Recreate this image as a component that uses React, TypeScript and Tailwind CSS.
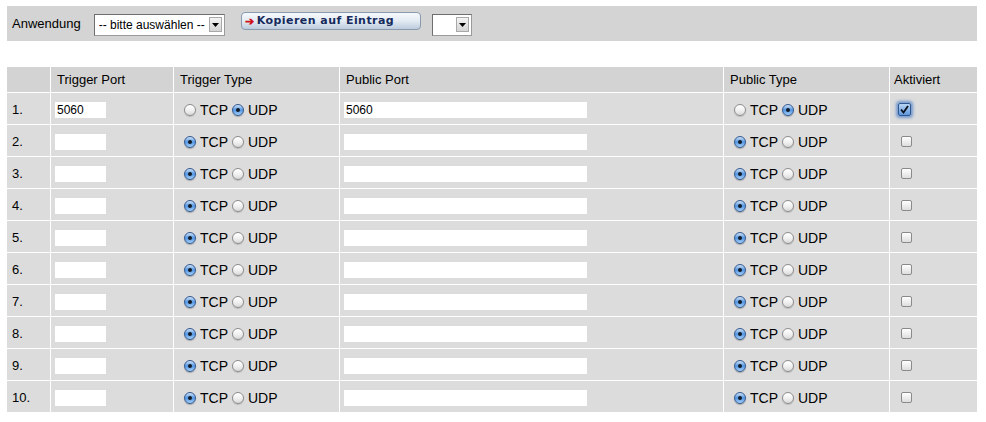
import React from 'react';

const rows = Array.from({ length: 10 }, (_, i) => ({
  n: i + 1,
  trigger: i === 0 ? '5060' : '',
  triggerUdp: i === 0,
  pub: i === 0 ? '5060' : '',
  pubUdp: i === 0,
  on: i === 0,
}));

const Radio: React.FC<{ checked: boolean }> = ({ checked }) =>
  checked ? (
    <span className="inline-flex w-[12px] h-[12px] rounded-full border border-[#35598f] bg-gradient-to-b from-[#cfe3f8] via-[#4f94e2] to-[#a6d0f8] items-center justify-center shadow-[0_1px_1px_rgba(0,0,0,0.25)]">
      <span className="w-[4px] h-[4px] rounded-full bg-[#141b26]" />
    </span>
  ) : (
    <span className="inline-block w-[12px] h-[12px] rounded-full border border-[#8d8d8d] bg-gradient-to-b from-[#ffffff] via-[#f2f2f2] to-[#d9d9d9] shadow-[0_1px_1px_rgba(0,0,0,0.15)]" />
  );

const TypeCell: React.FC<{ udp: boolean }> = ({ udp }) => (
  <div className="flex items-center pl-[10px] text-[14px] text-black">
    <Radio checked={!udp} />
    <span className="ml-[4px] mr-[4px]">TCP</span>
    <Radio checked={udp} />
    <span className="ml-[4px]">UDP</span>
  </div>
);

const Checkbox: React.FC<{ checked: boolean }> = ({ checked }) =>
  checked ? (
    <span className="inline-flex w-[13px] h-[13px] rounded-[2px] border border-[#2f5690] bg-gradient-to-b from-[#b9d5f4] to-[#5d98dd] items-center justify-center shadow-[0_0_3px_2px_rgba(80,130,200,0.75)]">
      <svg width="9" height="9" viewBox="0 0 9 9">
        <path d="M1 4.5 L3.5 7.5 L8 1" fill="none" stroke="#0b0f1a" strokeWidth="1.8" />
      </svg>
    </span>
  ) : (
    <span className="inline-block w-[11px] h-[11px] rounded-[2px] border border-[#8a8a8a] bg-gradient-to-b from-[#ffffff] to-[#dedede]" />
  );

const SelectBox: React.FC<{ label: string; w: string }> = ({ label, w }) => (
  <div
    className={`${w} h-[22px] bg-white border border-[#9a9a9a] border-t-[#6e6e6e] border-l-[#6e6e6e] flex items-center justify-between pl-[4px] pr-[2px]`}
  >
    <span className="text-[12px] text-black whitespace-nowrap">{label}</span>
    <span className="w-[13px] h-[15px] bg-gradient-to-b from-[#f4f4f4] to-[#d4d4d4] border border-[#a8a8a8] flex items-center justify-center">
      <svg width="7" height="4" viewBox="0 0 7 4">
        <path d="M0 0 H7 L3.5 4 Z" fill="#000" />
      </svg>
    </span>
  </div>
);

export default function App() {
  return (
    <div className="w-[986px] h-[422px] bg-white font-['Liberation_Sans',Arial,sans-serif] pt-[6px] pl-[7px]">
      <div className="w-[970px] h-[35px] bg-[#d4d4d4] flex items-center">
        <span className="ml-[5px] text-[13px] text-black">Anwendung</span>
        <div className="ml-[13px] mt-[2px]">
          <SelectBox label="-- bitte auswählen --" w="w-[131px]" />
        </div>
        <div className="ml-[16px] mb-[5px] w-[180px] h-[18px] rounded-[4px] border border-[#8a9bb0] bg-gradient-to-b from-[#f6f9fc] via-[#e3ebf3] to-[#bccbdc] flex items-center pl-[3px]">
          <span className="text-[#d0101a] text-[11px] font-bold leading-none">➔</span>
          <span className="ml-[3px] text-[11px] font-bold text-[#162a5c] font-['DejaVu_Sans',Verdana,sans-serif] tracking-[0.45px]">
            Kopieren auf Eintrag
          </span>
        </div>
        <div className="ml-[11px] mt-[2px]">
          <SelectBox label="" w="w-[40px]" />
        </div>
      </div>

      <div className="mt-[26px] w-[970px] grid grid-cols-[43px_122px_165px_383px_165px_87px] gap-px bg-white text-[13px] text-black">
        <div className="h-[25px] bg-[#d3d3d3]" />
        <div className="h-[25px] bg-[#d3d3d3] pl-[6px] pt-[1px] flex items-center">Trigger Port</div>
        <div className="h-[25px] bg-[#d3d3d3] pl-[6px] pt-[1px] flex items-center">Trigger Type</div>
        <div className="h-[25px] bg-[#d3d3d3] pl-[6px] pt-[1px] flex items-center">Public Port</div>
        <div className="h-[25px] bg-[#d3d3d3] pl-[6px] pt-[1px] flex items-center">Public Type</div>
        <div className="h-[25px] bg-[#d3d3d3] pl-[4px] pt-[1px] flex items-center">Aktiviert</div>
        {rows.map((r) => (
          <React.Fragment key={r.n}>
            <div className="h-[31px] bg-[#dcdcdc] pl-[5px] pt-[2px] flex items-center">{r.n}.</div>
            <div className="h-[31px] bg-[#dcdcdc] pl-[4px] pt-[2px] flex items-center">
              <div className="w-[51px] h-[16px] bg-white text-[12px] pl-[2px] leading-[16px]">{r.trigger}</div>
            </div>
            <div className="h-[31px] bg-[#dcdcdc] pt-[3px] flex items-center">
              <TypeCell udp={r.triggerUdp} />
            </div>
            <div className="h-[31px] bg-[#dcdcdc] pl-[4px] pt-[2px] flex items-center">
              <div className="w-[243px] h-[16px] bg-white text-[12px] pl-[2px] leading-[16px]">{r.pub}</div>
            </div>
            <div className="h-[31px] bg-[#dcdcdc] pt-[3px] flex items-center">
              <TypeCell udp={r.pubUdp} />
            </div>
            <div className={`h-[31px] bg-[#dcdcdc] pt-[2px] flex items-center ${r.on ? 'pl-[8px]' : 'pl-[11px]'}`}>
              <Checkbox checked={r.on} />
            </div>
          </React.Fragment>
        ))}
      </div>
    </div>
  );
}
